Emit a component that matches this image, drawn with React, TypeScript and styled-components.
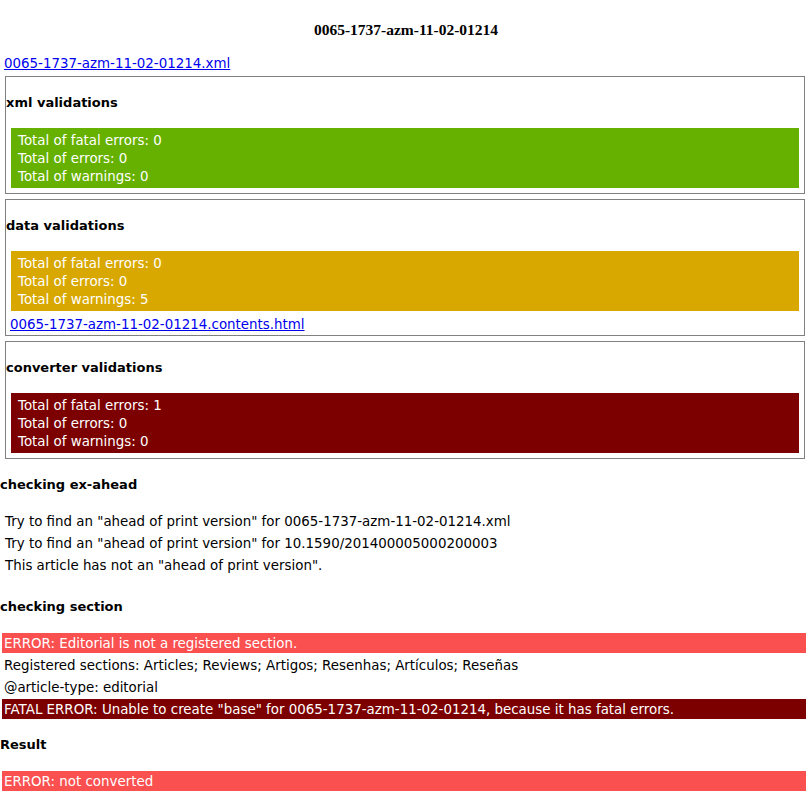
import React from "react";
import styled, { createGlobalStyle } from "styled-components";

const Global = createGlobalStyle`
  html, body { margin: 0; padding: 0; background: #fff; }
  body { font-family: "DejaVu Sans", Verdana, sans-serif; font-size: 13.4px; color: #000; }
`;

const Page = styled.div`
  display: flex;
  flex-direction: column;
  width: 812px;
`;

const Title = styled.h1`
  margin: 20px 0 0;
  height: 20px;
  line-height: 20px;
  text-align: center;
  font-family: "Liberation Serif", "Times New Roman", serif;
  font-size: 15.5px;
  font-weight: bold;
`;

const FileLink = styled.a<{ $indent?: number }>`
  display: block;
  line-height: 18px;
  height: 18px;
  color: #0000ee;
  text-decoration: underline;
  padding-left: ${(p) => p.$indent ?? 4}px;
`;

const TopLink = styled(FileLink)`
  margin-top: 15px;
`;

const Box = styled.section<{ $first?: boolean }>`
  margin: ${(p) => (p.$first ? 3 : 5)}px 7px 0 5px;
  border: 1px solid #808080;
  padding: 17px 0 5px;
  display: flex;
  flex-direction: column;
`;

const BoxTitle = styled.h3`
  margin: 0 0 16px;
  line-height: 18px;
  height: 18px;
  font-size: 13px;
  font-weight: bold;
`;

const Summary = styled.div<{ $bg: string }>`
  margin: 0 5px;
  padding: 4px 7px 2px;
  background: ${(p) => p.$bg};
  color: #fff;
  line-height: 18px;
`;

const BoxFooterLink = styled(FileLink)`
  margin-top: 5px;
  margin-bottom: -4px;
`;

const SectionTitle = styled.h3<{ $gap: number }>`
  margin: ${(p) => p.$gap}px 0 17px;
  line-height: 18px;
  height: 18px;
  font-size: 13px;
  font-weight: bold;
`;

const Lines = styled.div`
  display: flex;
  flex-direction: column;
  gap: 2px;
`;

const Line = styled.div<{ $bg?: string; $pad?: number }>`
  height: 20px;
  line-height: 21px;
  margin: 0 6px 0 2px;
  padding-left: ${(p) => p.$pad ?? 2}px;
  background: ${(p) => p.$bg ?? "transparent"};
  color: ${(p) => (p.$bg ? "#fff" : "#000")};
  white-space: nowrap;
  overflow: hidden;
`;

const GREEN = "#66b100";
const GOLD = "#d8a800";
const MAROON = "#7c0000";
const RED = "#fa5050";

type Counts = { fatal: number; errors: number; warnings: number };

const Totals = ({ c, bg }: { c: Counts; bg: string }) => (
  <Summary $bg={bg}>
    <div>Total of fatal errors: {c.fatal}</div>
    <div>Total of errors: {c.errors}</div>
    <div>Total of warnings: {c.warnings}</div>
  </Summary>
);

export default function App() {
  return (
    <Page>
      <Global />
      <Title>0065-1737-azm-11-02-01214</Title>
      <TopLink href="#">0065-1737-azm-11-02-01214.xml</TopLink>

      <Box $first>
        <BoxTitle>xml validations</BoxTitle>
        <Totals c={{ fatal: 0, errors: 0, warnings: 0 }} bg={GREEN} />
      </Box>

      <Box>
        <BoxTitle>data validations</BoxTitle>
        <Totals c={{ fatal: 0, errors: 0, warnings: 5 }} bg={GOLD} />
        <BoxFooterLink href="#">0065-1737-azm-11-02-01214.contents.html</BoxFooterLink>
      </Box>

      <Box>
        <BoxTitle>converter validations</BoxTitle>
        <Totals c={{ fatal: 1, errors: 0, warnings: 0 }} bg={MAROON} />
      </Box>

      <SectionTitle $gap={17}>checking ex-ahead</SectionTitle>
      <Lines>
        <Line $pad={3}>Try to find an "ahead of print version" for 0065-1737-azm-11-02-01214.xml</Line>
        <Line $pad={3}>Try to find an "ahead of print version" for 10.1590/201400005000200003</Line>
        <Line $pad={3}>This article has not an "ahead of print version".</Line>
      </Lines>

      <SectionTitle $gap={23}>checking section</SectionTitle>
      <Lines>
        <Line $bg={RED}>ERROR: Editorial is not a registered section.</Line>
        <Line>Registered sections: Articles; Reviews; Artigos; Resenhas; Artículos; Reseñas</Line>
        <Line>@article-type: editorial</Line>
        <Line $bg={MAROON}>FATAL ERROR: Unable to create "base" for 0065-1737-azm-11-02-01214, because it has fatal errors.</Line>
      </Lines>

      <SectionTitle $gap={17}>Result</SectionTitle>
      <Lines>
        <Line $bg={RED}>ERROR: not converted</Line>
      </Lines>
    </Page>
  );
}
